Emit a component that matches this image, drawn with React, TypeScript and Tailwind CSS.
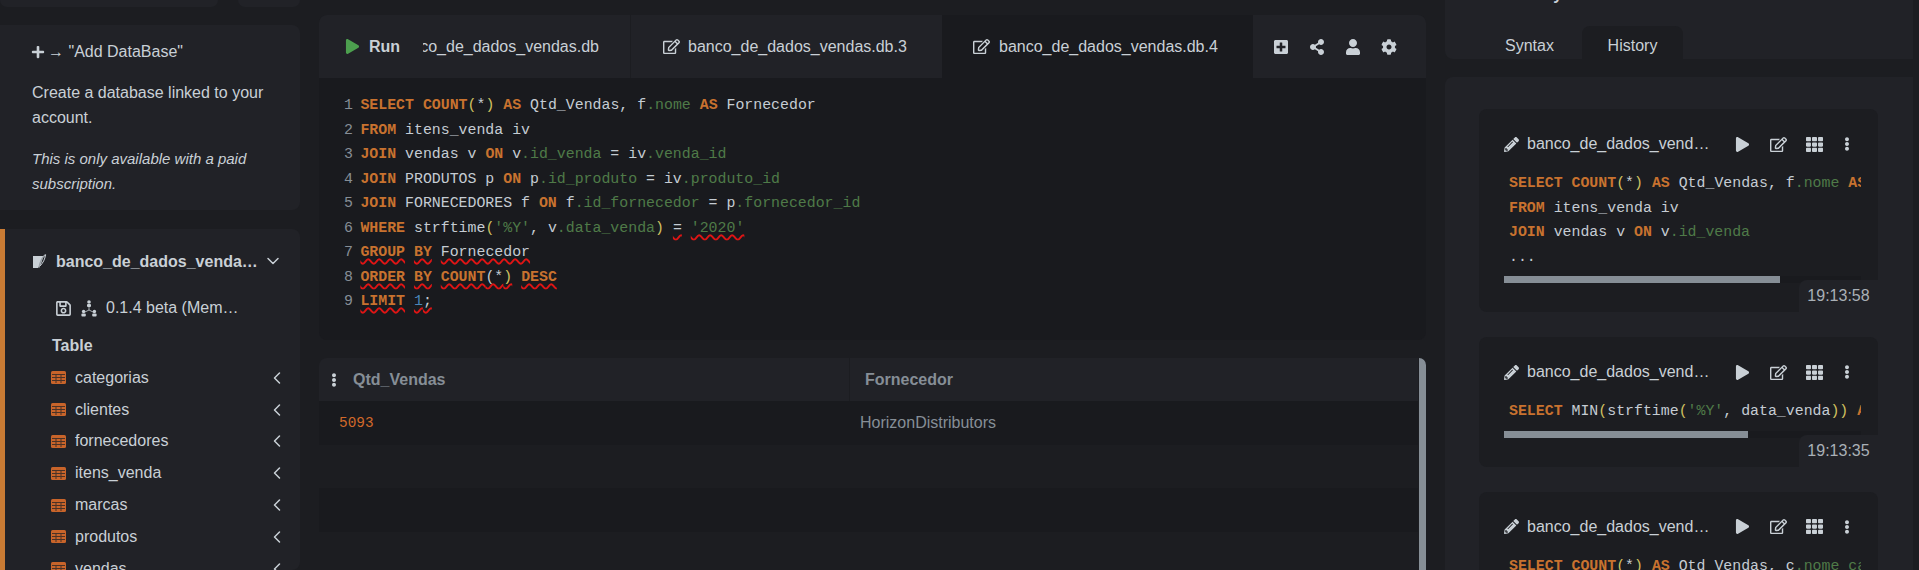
import React from "react";
import { FaPlus, FaRegSave, FaPlay, FaRegEdit, FaPlusSquare, FaShareAlt, FaUser, FaCog, FaEllipsisV, FaPencilAlt, FaTh } from "react-icons/fa";
import { ChevronDown, ChevronLeft } from "lucide-react";

const K = ({ c }: { c: string }) => <span className="font-bold text-[#c8722f]">{c}</span>;
const F = ({ c }: { c: string }) => <span className="text-[#4f7a48]">{c}</span>;
const W = ({ c, cl = "" }: { c: string; cl?: string }) => (
  <span className={`underline decoration-wavy decoration-[#e01414] decoration-[1.5px] underline-offset-[2px] [text-decoration-skip-ink:none] ${cl}`}>{c}</span>
);
const KW = ({ c }: { c: string }) => <W c={c} cl="font-bold text-[#c8722f]" />;
const Y = ({ c }: { c: string }) => <span className="text-[#d0c060]">{c}</span>;

const lines: React.ReactNode[] = [
  <><K c="SELECT" /> <K c="COUNT" /><Y c="(" />*<Y c=")" /> <K c="AS" /> Qtd_Vendas, f<F c=".nome" /> <K c="AS" /> Fornecedor</>,
  <><K c="FROM" /> itens_venda iv</>,
  <><K c="JOIN" /> vendas v <K c="ON" /> v<F c=".id_venda" /> = iv<F c=".venda_id" /></>,
  <><K c="JOIN" /> PRODUTOS p <K c="ON" /> p<F c=".id_produto" /> = iv<F c=".produto_id" /></>,
  <><K c="JOIN" /> FORNECEDORES f <K c="ON" /> f<F c=".id_fornecedor" /> = p<F c=".fornecedor_id" /></>,
  <><K c="WHERE" /> strftime<Y c="(" /><F c="'%Y'" />, v<F c=".data_venda" /><Y c=")" /> <W c="=" /> <W c="'2020'" cl="text-[#4f7a48]" /></>,
  <><KW c="GROUP" /> <KW c="BY" /> <W c="Fornecedor" /></>,
  <><KW c="ORDER" /> <KW c="BY" /> <KW c="COUNT" /><W c="(*" cl="" /><W c=")" cl="text-[#d0c060]" /> <KW c="DESC" /></>,
  <><KW c="LIMIT" /> <W c="1" cl="text-[#4a86b8]" /><W c=";" /></>,
];

const tables = ["categorias", "clientes", "fornecedores", "itens_venda", "marcas", "produtos", "vendas"];

function NoteIcon() {
  return (
    <svg width="15" height="15" viewBox="0 0 15 15" className="shrink-0">
      <path d="M1 2h10.5L9 10l-3 4H1z" fill="#c9d0d6" />
      <path d="M14 0.5C11 2 8.5 6 7 13.5" fill="none" stroke="#9aa0a6" strokeWidth="1.3" />
      <path d="M13.5 1C13 5 11 9 8 12" fill="none" stroke="#c9d0d6" strokeWidth="1" />
    </svg>
  );
}

function NetworkIcon() {
  return (
    <svg width="16" height="17" viewBox="0 0 16 17" fill="#c9d0d6" className="shrink-0">
      <circle cx="8" cy="2" r="1.8" />
      <rect x="6" y="4" width="4" height="3" rx="1" />
      <path d="M8 7v3M8 10L4 12M8 10l4 2" stroke="#c9d0d6" strokeWidth="0.8" fill="none" />
      <circle cx="2.6" cy="11.5" r="1.7" />
      <rect x="0.4" y="13.4" width="4.4" height="3.2" rx="1" />
      <circle cx="13.4" cy="11.5" r="1.7" />
      <rect x="11.2" y="13.4" width="4.4" height="3.2" rx="1" />
    </svg>
  );
}

function TableIcon() {
  return (
    <svg width="15" height="13" viewBox="0 0 15 13" className="shrink-0">
      <rect x="0" y="0" width="15" height="13" rx="1.5" fill="#c8642a" />
      <path d="M1 3.5h13M1 6.5h13M1 9.5h13M5 3.5v8.5M10 3.5v8.5" stroke="#4a3226" strokeWidth="1" fill="none" />
    </svg>
  );
}

function HistoryCard({ code, thumb, time, scroll = true }: { code: React.ReactNode; thumb: string; time: string; scroll?: boolean }) {
  return (
    <div className="relative rounded-lg bg-[#1c1d21] pl-[25px] pr-[17px] pt-[25px] pb-[29px] w-[399px] shrink-0">
      <div className="flex items-center h-[20px] text-[#c9d0d6]">
        <FaPencilAlt className="text-[15px] mr-[8px] shrink-0" />
        <span className="w-[191px] truncate text-[16px]">banco_de_dados_vendas.db.4</span>
        <FaPlay className="ml-[17px] text-[15px] shrink-0" />
        <FaRegEdit className="ml-[20px] text-[17px] shrink-0" />
        <FaTh className="ml-[19px] text-[17px] shrink-0" />
        <FaEllipsisV className="ml-[17px] text-[14px] shrink-0" />
      </div>
      <div className="mt-[17px] overflow-hidden w-[357px] pl-[5px] font-['Liberation_Mono',monospace] text-[14.88px] leading-[24.5px] text-[#c5ccd3] whitespace-pre">
        {code}
      </div>
      {scroll && (
        <div className="mt-[7px] h-[7px] w-[357px] bg-[#191a1e]">
          <div className={`h-full bg-[#868e96] ${thumb}`} />
        </div>
      )}
      <div className="absolute right-0 bottom-0 w-[79px] h-[32px] rounded-tl-lg bg-[#212227] flex items-center justify-center text-[16px] text-[#a9b0b6]">{time}</div>
    </div>
  );
}

export default function App() {
  return (
    <div className="flex w-[1919px] h-[570px] overflow-hidden bg-[#1c1d21] font-['Liberation_Sans',Arial,sans-serif] text-[#c9d0d6]">
      {/* Sidebar */}
      <aside className="w-[300px] shrink-0 flex flex-col">
        <div className="flex gap-[20px] h-[7px] shrink-0">
          <div className="w-[218px] bg-[#212227] rounded-b-lg" />
          <div className="w-[62px] bg-[#212227] rounded-b-lg" />
        </div>
        <div className="mt-[18px] h-[185px] shrink-0 bg-[#212227] rounded-r-lg pl-[31px] pt-[16px]">
          <div className="flex items-center h-[22px] text-[16px]">
            <FaPlus className="text-[14px] mr-[3px]" />
            <span>→ "Add DataBase"</span>
          </div>
          <p className="mt-[17px] ml-[1px] text-[16px] leading-[25px] w-[250px]">Create a database linked to your account.</p>
          <p className="mt-[16px] ml-[1px] text-[15px] italic leading-[25px] w-[240px]">This is only available with a paid subscription.</p>
        </div>
        <div className="mt-[19px] flex-1 bg-[#212227] rounded-r-lg border-l-[5px] border-[#c97b34] pl-[27px] pr-[14px] overflow-hidden">
          <div className="flex items-center h-[66px] pb-[1px]">
            <NoteIcon />
            <span className="ml-[9px] font-bold text-[16px] w-[204px] truncate">banco_de_dados_vendas.db.4</span>
            <ChevronDown size={20} strokeWidth={1.8} className="ml-[3px] -mt-[2px] shrink-0" />
          </div>
          <div className="flex items-center h-[26px] pl-[23px]">
            <FaRegSave className="text-[17px] shrink-0" />
            <span className="ml-[9px]"><NetworkIcon /></span>
            <span className="ml-[9px] text-[16px] w-[135px] truncate">0.1.4 beta (Memory)</span>
          </div>
          <div className="mt-[15px] pl-[20px] font-bold text-[16px] h-[20px] leading-[20px]">Table</div>
          <ul className="mt-[6px]">
            {tables.map((t) => (
              <li key={t} className="flex items-center h-[31.8px] pl-[19px]">
                <TableIcon />
                <span className="ml-[9px] text-[16px] flex-1">{t}</span>
                <ChevronLeft size={20} strokeWidth={1.8} className="-mr-[1px] -ml-[6px]" />
              </li>
            ))}
          </ul>
        </div>
      </aside>

      {/* Center */}
      <main className="ml-[19px] w-[1107px] shrink-0 flex flex-col pt-[15px]">
        <section className="h-[325px] shrink-0 bg-[#191a1e] rounded-lg overflow-hidden">
          <div className="flex h-[63px] bg-[#212227]">
            <button className="w-[104px] shrink-0 flex items-center pl-[26px] font-bold text-[16px]">
              <FaPlay className="text-[15px] text-[#4c9f4e] mr-[9px]" />
              Run
            </button>
            <div className="w-[208px] shrink-0 flex justify-end items-center overflow-hidden pr-[31px] border-r border-[#1c1d21] text-[16px] whitespace-nowrap">
              <span className="shrink-0">banco_de_dados_vendas.db</span>
            </div>
            <div className="w-[311px] shrink-0 flex items-center pl-[32px] text-[16px] whitespace-nowrap">
              <FaRegEdit className="text-[17px] mr-[8px]" />
              banco_de_dados_vendas.db.3
            </div>
            <div className="w-[311px] shrink-0 flex items-center pl-[31px] bg-[#191a1e] text-[16px] whitespace-nowrap">
              <FaRegEdit className="text-[17px] mr-[9px]" />
              banco_de_dados_vendas.db.4
            </div>
            <div className="flex-1 flex items-center pl-[20px] gap-[20px]">
              <FaPlusSquare className="text-[16px]" />
              <FaShareAlt className="text-[16px]" />
              <FaUser className="text-[16px]" />
              <FaCog className="text-[16px]" />
            </div>
          </div>
          <div className="pt-[15px] pl-[25px] flex font-['Liberation_Mono',monospace] text-[14.88px] leading-[24.5px] whitespace-pre text-[#c5ccd3]">
            <div className="w-[17.4px] shrink-0 text-[#868e96]">
              {lines.map((_, i) => <div key={i}>{i + 1}</div>)}
            </div>
            <div className="-ml-[1px]">
              {lines.map((l, i) => <div key={i}>{l}</div>)}
            </div>
          </div>
        </section>

        <section className="mt-[18px] flex flex-1 min-h-0">
          <div className="w-[1099px] shrink-0">
            <div className="flex h-[43px] bg-[#212227] rounded-tl-lg font-bold text-[#868e96] text-[16px]">
              <div className="w-[531px] shrink-0 flex items-center border-r border-[#1c1d21] pl-[8px]">
                <FaEllipsisV className="text-[14px] text-[#c9d0d6] mr-[12px]" />
                Qtd_Vendas
              </div>
              <div className="flex items-center pl-[15px]">Fornecedor</div>
            </div>
            <div className="flex h-[44px] items-center bg-[#191a1e]">
              <div className="w-[541px] shrink-0 pl-[20px] pt-[1px] font-['Liberation_Mono',monospace] text-[14.4px] text-[#d2692a]">5093</div>
              <div className="text-[16px] text-[#868e96]">HorizonDistributors</div>
            </div>
            <div className="h-[43px]" />
            <div className="h-[44px] bg-[#191a1e]" />
          </div>
          <div className="ml-[1px] w-[7px] bg-[#868e96] rounded-tr-lg" />
        </section>
      </main>

      {/* Right */}
      <aside className="ml-[19px] w-[468px] shrink-0 flex flex-col">
        <div className="h-[59px] shrink-0 bg-[#212227] rounded-bl-lg flex flex-col pl-[32px] text-[16px]">
          <div className="-mt-[15px] ml-[30px] h-[20px] leading-[20px] font-bold">History</div>
          <div className="mt-auto flex">
            <div className="w-[105px] h-[33px] pt-[7px] flex items-center justify-center">Syntax</div>
            <div className="w-[101px] h-[33px] pt-[7px] flex items-center justify-center bg-[#1c1d21] rounded-t-lg">History</div>
          </div>
        </div>
        <div className="mt-[18px] flex-1 bg-[#212227] rounded-tl-lg overflow-hidden pl-[34px] pt-[32px] flex flex-col gap-[25px]">
          <HistoryCard
            thumb="w-[276px]"
            time="19:13:58"
            code={
              <>
                <K c="SELECT" /> <K c="COUNT" /><Y c="(" />*<Y c=")" /> <K c="AS" /> Qtd_Vendas, f<F c=".nome" /> <K c="AS" /> Fornecedor{"\n"}
                <K c="FROM" /> itens_venda iv{"\n"}
                <K c="JOIN" /> vendas v <K c="ON" /> v<F c=".id_venda" />{"\n"}
                ...
              </>
            }
          />
          <HistoryCard
            thumb="w-[244px]"
            time="19:13:35"
            code={<><K c="SELECT" /> MIN<Y c="(" />strftime<Y c="(" /><F c="'%Y'" />, data_venda<Y c="))" /> <K c="AS" /> Ano</>}
          />
          <HistoryCard
            thumb="w-[276px]"
            time=""
            scroll={false}
            code={<><K c="SELECT" /> <K c="COUNT" /><Y c="(" />*<Y c=")" /> <K c="AS" /> Qtd_Vendas, c<F c=".nome" /> <F c="categoria" /></>}
          />
        </div>
      </aside>
    </div>
  );
}
